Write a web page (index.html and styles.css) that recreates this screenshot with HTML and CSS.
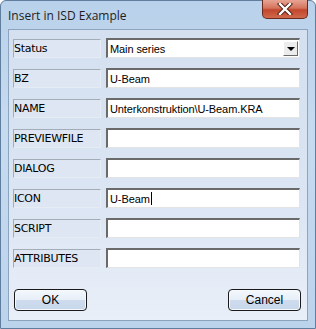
FILE: index.html
```html
<!DOCTYPE html>
<html lang="en">
<head>
  <meta charset="UTF-8" />
  <title>Insert in ISD Example</title>
  <link rel="stylesheet" href="styles.css">
</head>
<body>
  <div class="window">
    <div class="titlebar">
      <span class="title">Insert in ISD Example</span>
      <div class="close">
        <svg width="16" height="12" viewBox="0 0 16 12">
          <path d="M3 1 L13 11 M13 1 L3 11" stroke="#4a1c12" stroke-width="4.2" stroke-linecap="square" />
          <path d="M3 1 L13 11 M13 1 L3 11" stroke="#fff" stroke-width="2.4" stroke-linecap="square" />
        </svg>
      </div>
    </div>

    <div class="client">
      <div class="rows">
        <div class="row">
          <div class="label">Status</div>
          <div class="combo">
            <span class="value">Main series</span>
            <div class="drop"><span class="arrow"></span></div>
          </div>
        </div>
        <div class="row">
          <div class="label">BZ</div>
          <div class="field">U-Beam</div>
        </div>
        <div class="row">
          <div class="label">NAME</div>
          <div class="field">Unterkonstruktion\U-Beam.KRA</div>
        </div>
        <div class="row">
          <div class="label">PREVIEWFILE</div>
          <div class="field"></div>
        </div>
        <div class="row">
          <div class="label">DIALOG</div>
          <div class="field"></div>
        </div>
        <div class="row">
          <div class="label">ICON</div>
          <div class="field">U-Beam<span class="caret"></span></div>
        </div>
        <div class="row">
          <div class="label">SCRIPT</div>
          <div class="field"></div>
        </div>
        <div class="row">
          <div class="label">ATTRIBUTES</div>
          <div class="field"></div>
        </div>
      </div>

      <div class="buttons">
        <div class="button">OK</div>
        <div class="button">Cancel</div>
      </div>
    </div>
  </div>
</body>
</html>
```

FILE: styles.css
```css
body {
  margin: 0;
  padding: 0;
  background: #ffffff;
  font-family: "Liberation Sans", Arial, sans-serif;
}

.window {
  width: 316px;
  height: 329px;
  box-sizing: border-box;
  display: flex;
  flex-direction: column;
  padding: 0 7px 7px 7px;
  border: 1px solid #5f7d9c;
  border-radius: 6px 6px 0 0;
  background: linear-gradient(180deg, #b9d1ea 0%, #c7dbf0 40%, #bcd3ec 100%);
}

.titlebar {
  height: 28px;
  display: flex;
  align-items: flex-start;
  justify-content: space-between;
}

.title {
  margin-top: 6px;
  font-family: "Open Sans", "Noto Sans", sans-serif;
  font-size: 12px;
  color: #1e1e1e;
}

.close {
  width: 46px;
  height: 19px;
  margin-top: -1px;
  border: 1px solid #6b2a1c;
  border-top: none;
  border-radius: 0 0 5px 5px;
  background: linear-gradient(180deg, #e8a493 0%, #d4735c 45%, #c1462c 55%, #d06a4c 100%);
  display: flex;
  align-items: center;
  justify-content: center;
  box-sizing: border-box;
}

.client {
  flex: 1;
  display: flex;
  flex-direction: column;
  justify-content: space-between;
  border: 1px solid #8da4bf;
  background: linear-gradient(180deg, #d4e0f0 0%, #dbe5f3 60%, #e9eff8 100%);
  padding: 8px 6px 9px 4px;
}

.rows {
  display: flex;
  flex-direction: column;
  gap: 10px;
}

.row {
  display: flex;
  align-items: center;
  gap: 5px;
  height: 20px;
}

.label {
  width: 88px;
  height: 19px;
  box-sizing: border-box;
  border: 1px solid #a3adb8;
  border-right-color: #e6ecf4;
  border-bottom-color: #e6ecf4;
  background: #dde6f2;
  font-family: "DejaVu Sans", sans-serif;
  font-size: 11px;
  line-height: 17px;
  color: #000;
  padding-left: 0;
  letter-spacing: -0.3px;
}

.field,
.combo {
  width: 194px;
  height: 20px;
  box-sizing: border-box;
  background: #fff;
  border-top: 2px solid #6a6a6a;
  border-left: 2px solid #6a6a6a;
  border-right: 1px solid #e3e3e3;
  border-bottom: 1px solid #e3e3e3;
  font-size: 11px;
  letter-spacing: -0.1px;
  line-height: 16px;
  padding-left: 2px;
  color: #000;
  display: flex;
  align-items: center;
}

.combo {
  justify-content: space-between;
  padding-right: 1px;
}

.drop {
  width: 15px;
  height: 15px;
  box-sizing: border-box;
  background: #ececec;
  border: 1px solid #fff;
  border-right-color: #6a6a6a;
  border-bottom-color: #6a6a6a;
  display: flex;
  align-items: center;
  justify-content: center;
}

.arrow {
  width: 0;
  height: 0;
  border-left: 4px solid transparent;
  border-right: 4px solid transparent;
  border-top: 4px solid #000;
}

.caret {
  display: inline-block;
  width: 1px;
  height: 13px;
  background: #000;
  margin-left: 1px;
}

.buttons {
  display: flex;
  justify-content: space-between;
  padding-left: 1px;
}

.button {
  width: 73px;
  height: 22px;
  box-sizing: border-box;
  border: 1px solid #1a1a1a;
  border-radius: 4px;
  background: linear-gradient(180deg, #f4f8fc 0%, #e6eef8 50%, #cfdcee 52%, #c7d6ea 100%);
  box-shadow: inset 0 0 0 1px #f5f9fd;
  font-size: 12px;
  line-height: 20px;
  text-align: center;
  color: #000;
}
```
